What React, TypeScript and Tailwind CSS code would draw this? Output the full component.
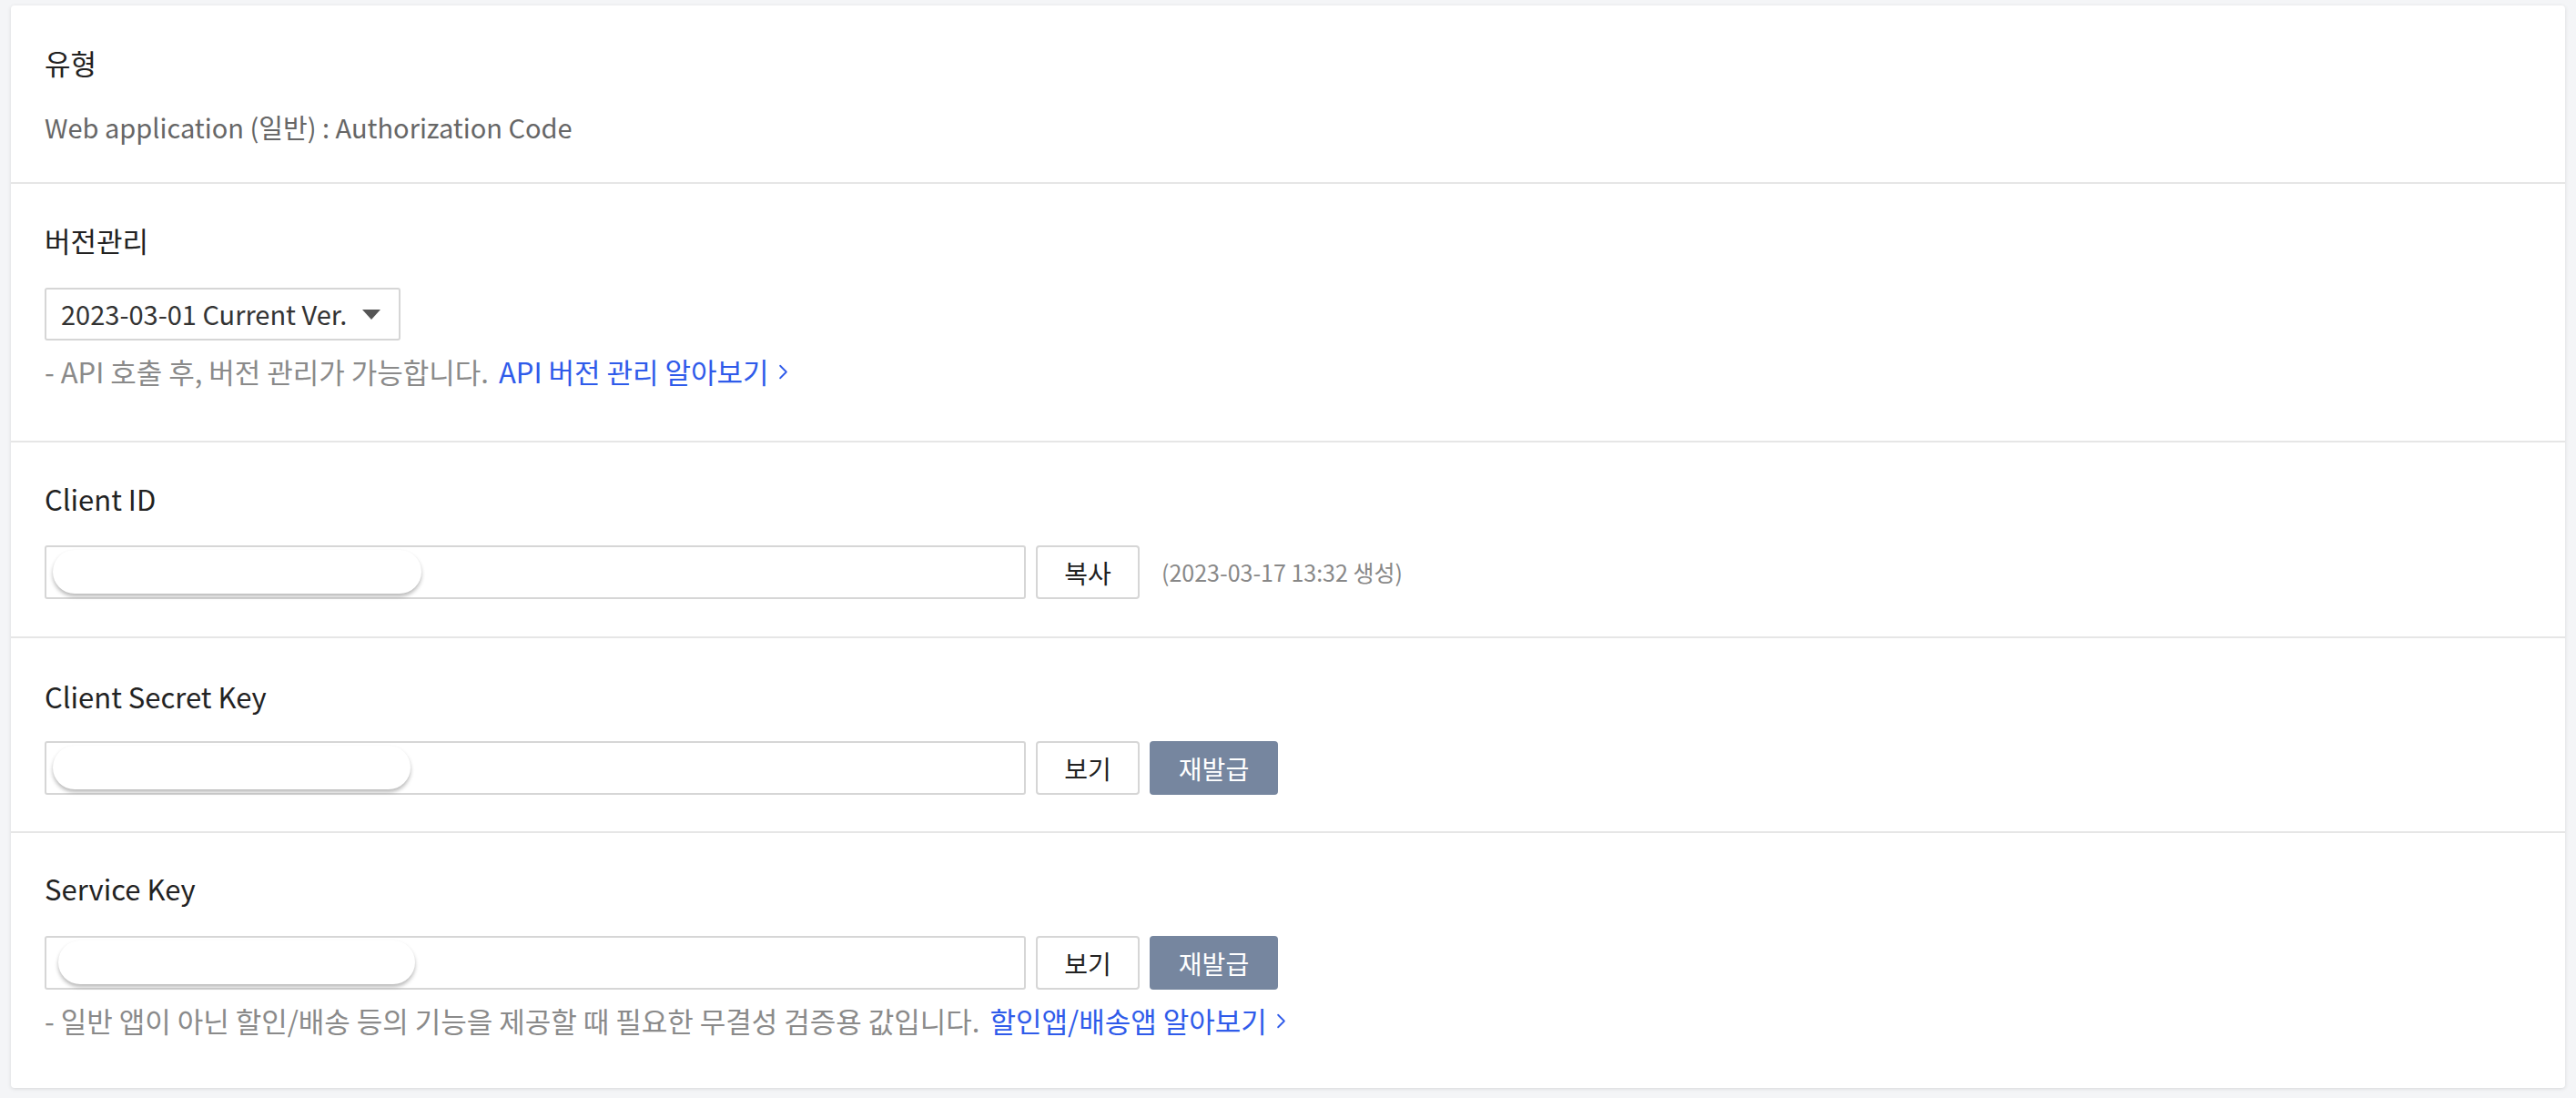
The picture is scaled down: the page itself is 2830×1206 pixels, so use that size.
import { ChevronRight } from 'lucide-react'

const font = { fontFamily: '"Noto Sans CJK KR", "Noto Sans", sans-serif' }

function Label({ children }: { children: React.ReactNode }) {
  return <div className="text-[31px] leading-[42px] text-[#222]">{children}</div>
}

// masked key value inside the input
function KeyField({ blob }: { blob: string }) {
  return (
    <div className="h-[59px] w-[1078px] rounded-[3px] border-2 border-[#d6d6d6] bg-white pl-[7px] pt-[3px]">
      <div className={`h-[48px] ${blob} rounded-full bg-white shadow-[0_3px_4px_rgba(0,0,0,0.28)]`} />
    </div>
  )
}

function OutlineButton({ children }: { children: React.ReactNode }) {
  return (
    <button className="h-[59px] w-[114px] rounded-[4px] border-2 border-[#d6d6d6] bg-white text-[28px] text-[#222]">
      {children}
    </button>
  )
}

function ReissueButton() {
  return (
    <button className="h-[59px] w-[141px] rounded-[4px] bg-[#76869f] text-[28px] text-white">재발급</button>
  )
}

function Note({ text, link }: { text: string; link: string }) {
  return (
    <div className="mt-[13px] flex items-center text-[31px] leading-[42px] text-[#8a8a8a]">
      <span>{text}</span>
      <a href="#" className="ml-[11px] flex items-center text-[#2f5bea]">
        {link}
        <ChevronRight className="ml-[2px] h-[27px] w-[27px]" strokeWidth={1.6} />
      </a>
    </div>
  )
}

export default function App() {
  return (
    <div className="min-h-screen bg-[#f4f5f7] px-[12px] pt-[6px]" style={font}>
      <div className="rounded-[4px] bg-white shadow-[0_1px_4px_rgba(0,0,0,0.12)]">
        {/* 유형 */}
        <section className="border-b-2 border-[#e6e6e6] px-[37px] pb-[40px] pt-[42px]">
          <Label>유형</Label>
          <div className="mt-[28px] text-[29px] leading-[42px] text-[#666]">
            Web application (일반) : Authorization Code
          </div>
        </section>

        {/* 버전관리 */}
        <section className="border-b-2 border-[#e6e6e6] px-[37px] pb-[55px] pt-[41px]">
          <Label>버전관리</Label>
          <div className="mt-[31px] flex h-[58px] w-[391px] items-center justify-between rounded-[3px] border-2 border-[#d6d6d6] pl-[16px] pr-[20px] text-[29px] text-[#333]">
            <span>2023-03-01 Current Ver.</span>
            <svg width="20" height="11" viewBox="0 0 20 11">
              <path d="M0 0h20L10 11z" fill="#555" />
            </svg>
          </div>
          <Note text="- API 호출 후, 버전 관리가 가능합니다." link="API 버전 관리 알아보기" />
        </section>

        {/* Client ID */}
        <section className="border-b-2 border-[#e6e6e6] px-[37px] pb-[41px] pt-[41px]">
          <Label>Client ID</Label>
          <div className="mt-[30px] flex items-center gap-[11px]">
            <KeyField blob="w-[405px]" />
            <OutlineButton>복사</OutlineButton>
            <span className="ml-[13px] text-[25px] text-[#888]">(2023-03-17 13:32 생성)</span>
          </div>
        </section>

        {/* Client Secret Key */}
        <section className="border-b-2 border-[#e6e6e6] px-[37px] pb-[40px] pt-[43px]">
          <Label>Client Secret Key</Label>
          <div className="mt-[28px] flex items-center gap-[11px]">
            <KeyField blob="w-[393px]" />
            <OutlineButton>보기</OutlineButton>
            <ReissueButton />
          </div>
        </section>

        {/* Service Key */}
        <section className="px-[37px] pb-[53px] pt-[40px]">
          <Label>Service Key</Label>
          <div className="mt-[31px] flex items-center gap-[11px]">
            <KeyField blob="ml-[6px] w-[392px]" />
            <OutlineButton>보기</OutlineButton>
            <ReissueButton />
          </div>
          <Note
            text="- 일반 앱이 아닌 할인/배송 등의 기능을 제공할 때 필요한 무결성 검증용 값입니다."
            link="할인앱/배송앱 알아보기"
          />
        </section>
      </div>
    </div>
  )
}
